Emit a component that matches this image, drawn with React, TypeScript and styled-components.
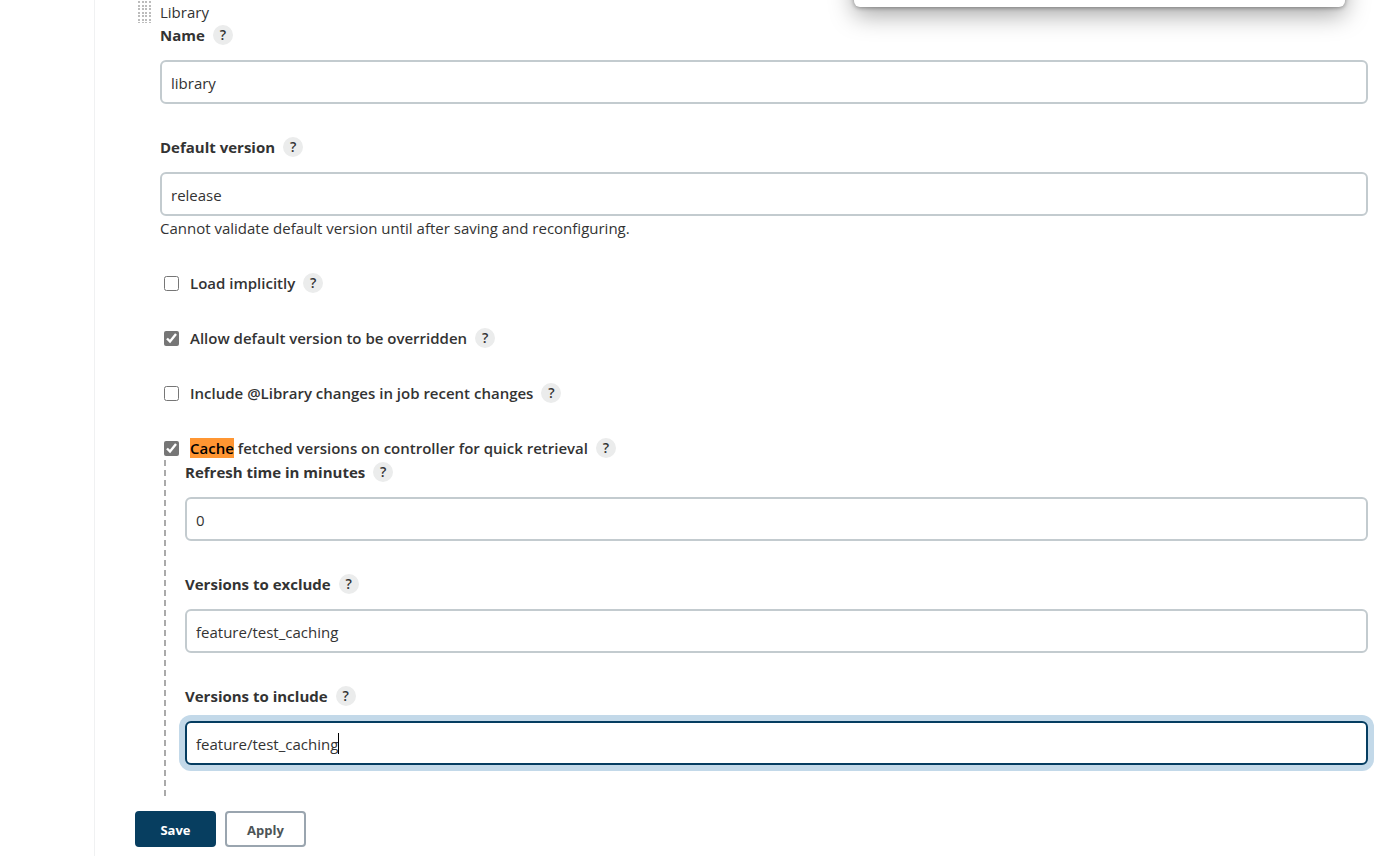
import React, { useEffect, useRef } from "react";
import styled, { createGlobalStyle, css } from "styled-components";

const GlobalStyle = createGlobalStyle`
  *, *::before, *::after { box-sizing: border-box; }
  body {
    margin: 0;
    background: #fff;
    color: #333;
    font-family: "Open Sans", "Noto Sans", sans-serif;
    font-size: 15px;
    line-height: 24px;
  }
`;

const Page = styled.div`
  display: grid;
  grid-template-columns: 95px minmax(0, 1fr);
  min-height: 100vh;
`;

const SidePanel = styled.aside`
  border-right: 1px solid #f0f1f2;
`;

const Main = styled.main`
  display: flex;
  flex-direction: column;
  padding: 0 32px 0 40px;
`;

const Chunk = styled.section`
  padding-left: 25px;
`;

const ChunkHeader = styled.header`
  display: flex;
  align-items: center;
  height: 23px;
  margin-left: -22px;
  gap: 8px;
`;

const Grip = styled.svg`
  flex: none;
  width: 14px;
  height: 23px;
  fill: #bcbcbc;
`;

const Field = styled.div`
  padding-bottom: 31px;
`;

const LabelRow = styled.div<{ $spaced?: boolean }>`
  display: flex;
  align-items: center;
  gap: 8px;
  height: 24px;
  margin-bottom: ${(p) => (p.$spaced ? "13px" : "0")};
`;

const FieldLabel = styled.label`
  font-weight: 700;
`;

const CheckLabel = styled.label`
  font-weight: 600;
`;

const HelpButton = styled.button`
  display: flex;
  align-items: center;
  justify-content: center;
  width: 20px;
  height: 20px;
  padding: 0;
  border: 0;
  border-radius: 50%;
  background: #ebecec;
  color: #333;
  font: inherit;
  font-size: 14px;
  font-weight: 600;
  line-height: 20px;
  cursor: pointer;
`;

const InputBox = styled.div`
  position: relative;
`;

const TextInput = styled.input<{ $active?: boolean }>`
  display: block;
  width: 100%;
  height: 44px;
  padding: 2px 9px 0;
  border: 2px solid #c3cbcf;
  border-radius: 6px;
  outline: none;
  background: #fff;
  color: #333;
  font: inherit;
  caret-color: transparent;
  ${(p) =>
    p.$active &&
    css`
      border-color: #053d61;
      box-shadow: 0 0 0 6px #c3d9e9;
    `}
`;

const Caret = styled.span`
  position: absolute;
  top: 12px;
  left: 153px;
  width: 1px;
  height: 21px;
  background: #000;
  pointer-events: none;
`;

const HelpText = styled.p`
  margin: 0;
`;

const CheckBox = styled.input`
  flex: none;
  width: 15px;
  height: 15px;
  margin: 0 3px 0 4px;
  accent-color: #767676;
`;

const Found = styled.mark`
  background: #ff9632;
  color: #000;
`;

const Nested = styled.div`
  margin-left: 4px;
  padding-left: 19px;
  border-left: 2px dashed #aaa;
`;

const ButtonBar = styled.footer`
  display: flex;
  gap: 9px;
  padding: 15px 0 9px;
`;

const ActionButton = styled.button<{ $primary?: boolean }>`
  width: 81px;
  height: 36px;
  padding: 2px 0 0;
  border: 2px solid ${(p) => (p.$primary ? "#073e60" : "#9aa5af")};
  border-radius: 4px;
  background: ${(p) => (p.$primary ? "#073e60" : "#fff")};
  color: ${(p) => (p.$primary ? "#fff" : "#4d5456")};
  font: inherit;
  font-size: 13px;
  font-weight: 700;
  cursor: pointer;
`;

const Popup = styled.div`
  position: absolute;
  top: -93px;
  right: 55px;
  width: 491px;
  height: 100px;
  border-radius: 6px;
  background: #fff;
  box-shadow: 0 1px 4px rgba(0, 0, 0, 0.35), 0 8px 24px rgba(0, 0, 0, 0.35);
`;

const gripRows = [1, 5, 8, 12, 15, 19, 22];
const gripColumns = [0, 4, 7, 11];

function GripIcon() {
  return (
    <Grip viewBox="0 0 14 23" aria-hidden="true">
      {gripRows.map((y) =>
        gripColumns.map((x) => <rect key={`${x}-${y}`} x={x} y={y} width="2" height="2" />)
      )}
    </Grip>
  );
}

function Help({ topic }: { topic: string }) {
  return (
    <HelpButton type="button" aria-label={`Help for feature: ${topic}`}>
      ?
    </HelpButton>
  );
}

interface TextFieldProps {
  id: string;
  label: string;
  value: string;
  note?: string;
  active?: boolean;
}

function TextField({ id, label, value, note, active }: TextFieldProps) {
  const input = useRef<HTMLInputElement>(null);

  useEffect(() => {
    if (active && input.current) {
      input.current.focus({ preventScroll: true });
      input.current.setSelectionRange(value.length, value.length);
    }
  }, [active, value]);

  return (
    <Field>
      <LabelRow $spaced>
        <FieldLabel htmlFor={id}>{label}</FieldLabel>
        <Help topic={label} />
      </LabelRow>
      <InputBox>
        <TextInput ref={input} id={id} type="text" defaultValue={value} $active={active} />
        {active && <Caret />}
      </InputBox>
      {note && <HelpText>{note}</HelpText>}
    </Field>
  );
}

interface CheckRowProps {
  id: string;
  topic: string;
  checked?: boolean;
  children: React.ReactNode;
}

function CheckRow({ id, topic, checked, children }: CheckRowProps) {
  return (
    <LabelRow>
      <CheckBox id={id} type="checkbox" defaultChecked={checked} />
      <CheckLabel htmlFor={id}>{children}</CheckLabel>
      <Help topic={topic} />
    </LabelRow>
  );
}

export default function App() {
  return (
    <>
      <GlobalStyle />
      <Page>
        <SidePanel />
        <Main>
          <Chunk>
            <ChunkHeader>
              <GripIcon />
              Library
            </ChunkHeader>
            <TextField id="name" label="Name" value="library" />
            <TextField
              id="default-version"
              label="Default version"
              value="release"
              note="Cannot validate default version until after saving and reconfiguring."
            />
            <Field>
              <CheckRow id="implicit" topic="Load implicitly">
                Load implicitly
              </CheckRow>
            </Field>
            <Field>
              <CheckRow id="override" topic="Allow default version to be overridden" checked>
                Allow default version to be overridden
              </CheckRow>
            </Field>
            <Field>
              <CheckRow id="changes" topic="Include @Library changes in job recent changes">
                Include @Library changes in job recent changes
              </CheckRow>
            </Field>
            <CheckRow id="cache" topic="Cache fetched versions" checked>
              <Found>Cache</Found> fetched versions on controller for quick retrieval
            </CheckRow>
            <Nested>
              <TextField id="refresh" label="Refresh time in minutes" value="0" />
              <TextField id="exclude" label="Versions to exclude" value="feature/test_caching" />
              <TextField id="include" label="Versions to include" value="feature/test_caching" active />
            </Nested>
          </Chunk>
          <ButtonBar>
            <ActionButton type="submit" $primary>
              Save
            </ActionButton>
            <ActionButton type="button">Apply</ActionButton>
          </ButtonBar>
        </Main>
      </Page>
      <Popup />
    </>
  );
}
